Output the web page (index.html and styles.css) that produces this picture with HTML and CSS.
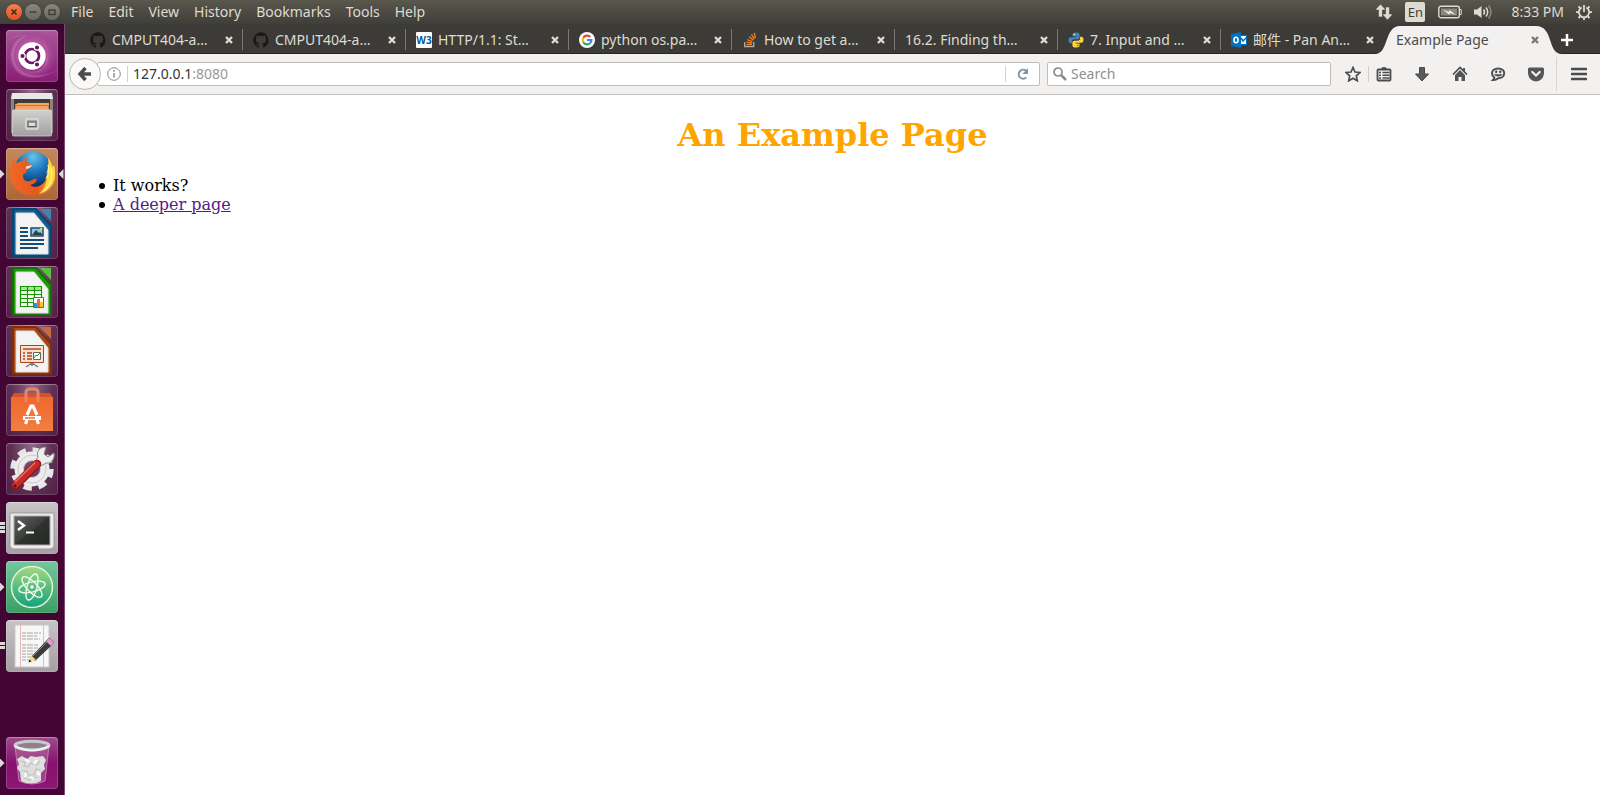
FILE: index.html
```html
<!DOCTYPE html>
<html lang="en">
<head>
<meta charset="utf-8">
<title>Example Page</title>
<link rel="stylesheet" href="styles.css">
</head>
<body>
<div class="desktop">
<header class="panel">
  <div class="window-controls">
    <button class="wc wc-close" aria-label="Close window"><svg width="16" height="16" viewBox="0 0 16 16"><path d="M5.500 5.500l5 5M10.500 5.500l-5 5" stroke="#3c2a20" stroke-width="1.600"/></svg></button>
    <button class="wc" aria-label="Minimize"><svg width="16" height="16" viewBox="0 0 16 16"><path d="M4.500 8h7" stroke="#3a3935" stroke-width="1.300"/></svg></button>
    <button class="wc" aria-label="Maximize"><svg width="16" height="16" viewBox="0 0 16 16"><rect x="5" y="6" width="6" height="4.500" fill="none" stroke="#3a3935" stroke-width="1.300"/></svg></button>
  </div>
  <nav class="menubar">
    <button>File</button><button>Edit</button><button>View</button><button>History</button><button>Bookmarks</button><button>Tools</button><button>Help</button>
  </nav>
  <div class="indicators">
    <button aria-label="Network"><svg width="18" height="18" viewBox="0 0 18 18" fill="#dfdbd2"><path d="M5.500 1L11 7H7.500v7h-4V7H0zM12.500 17L7 11h3.500V4h4v7H18z" stroke="#48463f" stroke-width=".6"/></svg></button>
    <button class="lang" aria-label="Keyboard layout">En</button>
    <button aria-label="Battery"><svg width="24" height="14" viewBox="0 0 24 14"><rect x=".8" y="1.300" width="20.500" height="11.400" rx="2" fill="none" stroke="#dfdbd2" stroke-width="1.400"/><path d="M22 4.500h1.200v5H22" fill="none" stroke="#dfdbd2"/><rect x="3" y="3.500" width="16" height="7" fill="#8b8882"/><path d="M5 4.500l6 2.500.5-2 6.500 5-6-2-.8 1.700z" fill="#f0ede6"/></svg></button>
    <button aria-label="Volume"><svg width="20" height="18" viewBox="0 0 20 18" fill="none" stroke="#dfdbd2" stroke-width="1.500"><path d="M0 6.500h3L7.500 3v12L3 11.500H0z" fill="#dfdbd2" stroke="none"/><path d="M9.500 6.500q2 2.500 0 5M12 4.500q3.500 4.500 0 9"/><path d="M14.500 2.500q5 6.500 0 13" stroke="#8c8981"/></svg></button>
    <button class="clock">8:33 PM</button>
    <button aria-label="Session"><svg width="16" height="18" viewBox="0 0 16 18" fill="none" stroke="#dfdbd2"><path d="M5.700 4.500A5.200 5.200 0 1 0 10.300 4.500" stroke-width="1.800"/><path d="M8 2v7" stroke-width="1.800"/><path d="M0 9.200h2.500M13.500 9.200H16M2.500 15l1.700-1.700M11.800 13.300l1.700 1.700M8 14.500V17M2.500 3.500l1.700 1.700M13.500 3.500l-1.700 1.700" stroke-width="1.800"/></svg></button>
  </div>
</header>
<div class="workspace">
<aside class="launcher">
  <button class="tile t-dash" aria-label="Dash"><svg viewBox="0 0 52 52"><defs><radialGradient id="gd"><stop offset="0" stop-color="#d58bc3"/><stop offset=".6" stop-color="#b5539f"/><stop offset="1" stop-color="#99408a" stop-opacity="0"/></radialGradient></defs><circle cx="26" cy="25" r="25" fill="url(#gd)"/><path d="M2 10C20 1 39 5 42 23c2 10-5 17-14 20 16-3 19-28 5-34C24 3 11 4 2 10z" fill="#dba8cf" opacity=".4"/><path d="M50 40C34 50 14 46 9 32 6 22 10 11 21 6 4 8 0 30 12 42c9 8 27 7 38-2z" fill="#dba8cf" opacity=".3"/><circle cx="26" cy="27.500" r="14" fill="#5a0f4d" opacity=".35"/><circle cx="26" cy="26" r="13.700" fill="#fff"/><circle cx="26" cy="26" r="7" fill="none" stroke="#6c1560" stroke-width="2.700"/><g stroke="#fff" stroke-width="1.200" fill="#6c1560"><circle cx="16.500" cy="26" r="2.700"/><circle cx="31" cy="17.500" r="2.700"/><circle cx="31" cy="34.500" r="2.700"/></g></svg></button>
  <button class="tile t-clear" aria-label="Files"><svg viewBox="0 0 52 52"><defs><linearGradient id="gf" x2="0" y2="1"><stop stop-color="#d2d0cf"/><stop offset="1" stop-color="#a2a09e"/></linearGradient></defs><path d="M6 4h40l1 7v33H5V11z" fill="#868485"/><path d="M6 4h40l1 6H5z" fill="#e8e8e8"/><path d="M8 10h36v12H8z" fill="#403a3b"/><path d="M9 15h34v7H9z" fill="#e7711b"/><path d="M10 18h32M9 20h34" stroke="#f7d9b3"/><path d="M9 16l3-2h31v2z" fill="#f7a657"/><rect x="6.500" y="21" width="39" height="26" rx="1" fill="url(#gf)" stroke="#ddd" stroke-width=".7"/><rect x="20" y="30" width="12" height="10" rx="1.500" fill="#aaa" stroke="#dedede" stroke-width="1.500"/><rect x="22" y="33" width="8" height="4.500" fill="#ddd" stroke="#555"/></svg></button>
  <button class="tile t-fox" aria-label="Firefox"><i class="run"></i><i class="focus"></i><svg viewBox="0 0 52 52"><defs><radialGradient id="gx" cx=".5" cy=".15" r=".8"><stop stop-color="#69c4ed"/><stop offset=".5" stop-color="#1b75ba"/><stop offset="1" stop-color="#0b2e68"/></radialGradient><linearGradient id="gy" x2="1" y2="0"><stop stop-color="#ee6a25"/><stop offset=".6" stop-color="#e8561d"/><stop offset="1" stop-color="#f8bd2b"/></linearGradient></defs><circle cx="27" cy="22" r="18.500" fill="url(#gx)"/><path d="M7 10l3 5q3-2 6-1.500Q19 9 21 9q-1 4 0 6l5 2q-.5 2.500-5 4.500l-1 3.500q-3 0-3 3c0 4 3 6 7 5 3-1 4-3 7-2q-1 5-7 6c7 5 17-1 18-12l3-10q5 7 4 16C47 41 38 47.500 27 47.500 14 47.500 4 38 4 26c0-4 .7-7 2-9q0-4 1-7z" fill="url(#gy)"/><path d="M20 18.500l6-1.500q-1 3-6 4z" fill="#fff" opacity=".8"/><path d="M42 10c3 3 4 7 4 10l2-3c4 14-4 26-15 29 6-5 7-11 8-16l-2 2 3-8-2 2c2-5 3-10 2-16z" fill="#ffda38"/><path d="M45 21c2 9-1 17-7 22M42 17c2 6 0 10-1 13" fill="none" stroke="#fff09b" stroke-width="1.200"/></svg></button>
  <button class="tile t-clear" aria-label="Writer"><svg viewBox="0 0 52 52"><path d="M7 2h23l15 17v30H7z" fill="#145c91" stroke="#0b466f" stroke-width="2"/><path d="M34 2h11v12z" fill="#3c85b5"/><path d="M10 6h18l14 17v24H10z" fill="#f3f3f3" stroke="#ddd"/><path d="M14 21h8M14 25h8M14 29h8M14 33h24M14 37h24M14 41h18" stroke="#174d74" stroke-width="2"/><path d="M25 21h12v8H25z" fill="#8cc7e9" stroke="#174d74" stroke-width="1.500"/><path d="M26 28l4-5 3 3 1-1 3 3z" fill="#353f43"/><circle cx="35" cy="22" r="1.300" fill="#f7d33a"/></svg></button>
  <button class="tile t-clear" aria-label="Calc"><svg viewBox="0 0 52 52"><path d="M7 2h23l15 17v30H7z" fill="#209909" stroke="#147006" stroke-width="2"/><path d="M34 2h11v12z" fill="#5ebd45"/><path d="M10 6h18l14 17v24H10z" fill="#f3f3f3" stroke="#ddd"/><path d="M14.500 20.500h21v20h-21z" fill="#fff"/><path d="M14.500 20.500h21v4h-21z" fill="#a8e596"/><path d="M14.500 20.500h21v20h-21zM14.500 24.500h21M14.500 28.500h21M14.500 32.500h21M14.500 36.500h21M21.500 20v20M28.500 20v20" stroke="#169600" stroke-width="1.200" fill="none"/><path d="M27.500 31.500h10v10h-10z" fill="#fff" stroke="#666"/><path d="M28 37h3v4h-3z" fill="#269ccc"/><path d="M31 33h3v8h-3z" fill="#ef6b30"/><path d="M34 36h3v5h-3z" fill="#f3c733"/></svg></button>
  <button class="tile t-clear" aria-label="Impress"><svg viewBox="0 0 52 52"><path d="M7 2h23l15 17v30H7z" fill="#ab4817" stroke="#7c300b" stroke-width="2"/><path d="M34 2h11v12z" fill="#c76d39"/><path d="M10 6h18l14 17v24H10z" fill="#f3f3f3" stroke="#ddd"/><path d="M14.500 20.500h23v17h-23z" fill="#f9e2d5" stroke="#a6461a"/><path d="M17 24h18" stroke="#d36b36" stroke-width="2"/><path d="M17 28h2M17 31h2M17 34h2M21 28h5M21 31h5M21 34h5" stroke="#a6461a" stroke-width="1.700"/><path d="M27.500 27.500h7v7h-7z" fill="#fff" stroke="#666"/><path d="M28 33l2-3 1 1 3-3" fill="none" stroke="#299525"/><path d="M26 38v3M26 38l-6 4M26 38l6 4" stroke="#777" stroke-width="1.500"/></svg></button>
  <button class="tile t-clear" aria-label="Software"><svg viewBox="0 0 52 52"><defs><linearGradient id="gs" x2="0" y2="1"><stop stop-color="#f0672e"/><stop offset="1" stop-color="#f07f43"/></linearGradient></defs><path d="M5 14l3-5h36l3 5z" fill="#d2552a"/><path d="M5 13h42v34H5z" fill="url(#gs)"/><path d="M20 18V9q0-4 4-4h4q4 0 4 4v9" fill="none" stroke="#e8836a" stroke-width="3"/><path d="M21 31l4-9h2l4 9M19.500 40l1.500-4M32.500 40L31 36" fill="none" stroke="#fff" stroke-width="3.200"/><path d="M17 34h18" stroke="#fff" stroke-width="4"/><path d="M19 34h10" stroke="#ec7237" stroke-width="1.500"/></svg></button>
  <button class="tile t-clear" aria-label="System Settings"><svg viewBox="0 0 52 52"><circle cx="26" cy="26" r="18.500" fill="none" stroke="#e6e6e6" stroke-width="6.500" stroke-dasharray="8 6.530"/><circle cx="26" cy="26" r="13" fill="none" stroke="#ececec" stroke-width="9"/><circle cx="26" cy="26" r="14" fill="none" stroke="#cbcbcb"/><circle cx="26" cy="26" r="8.500" fill="none" stroke="#cfcfcf"/><path d="M29 19l4 5 7-4c5 1 9-4 8-10l-6 4-4-3 2-7c-6 0-10 4-8 10z" fill="#eee" stroke="#8b8b8b"/><path d="M9.500 42.500L31 21" stroke="#8e1516" stroke-width="8.500" stroke-linecap="round"/><path d="M9.500 42L30.500 21" stroke="#c92a2a" stroke-width="6.500" stroke-linecap="round"/><path d="M9 39L29 19.500" stroke="#ed6d66" stroke-width="1.500"/><circle cx="9" cy="43" r="1.500" fill="#650e15"/></svg></button>
  <button class="tile t-gray" aria-label="Terminal"><i class="run run-three"></i><svg viewBox="0 0 52 52"><defs><linearGradient id="gt" x2="1" y2="1"><stop stop-color="#626461"/><stop offset=".5" stop-color="#3b3d3b"/><stop offset=".51" stop-color="#30322f"/><stop offset="1" stop-color="#252725"/></linearGradient></defs><path d="M4 11h44v34l-3 2H7l-3-2z" fill="#ececea" stroke="#999"/><path d="M8 14h36v29H8z" fill="url(#gt)" stroke="#aaa"/><path d="M12 19l6 4.500-6 4.500" fill="none" stroke="#fff" stroke-width="2.500"/><path d="M20 30.500h8" stroke="#fff" stroke-width="2"/></svg></button>
  <button class="tile t-atom" aria-label="Atom"><i class="run"></i><svg viewBox="0 0 52 52"><defs><linearGradient id="ga" x2="0" y2="1"><stop stop-color="#a3d883"/><stop offset="1" stop-color="#12a379"/></linearGradient></defs><circle cx="26" cy="26" r="20.500" fill="url(#ga)" stroke="#e3f2dd" stroke-width="1.500"/><g fill="none" stroke="#eefbee" stroke-width="1.400"><ellipse cx="26" cy="26" rx="13.500" ry="5" transform="rotate(-14 26 26)"/><ellipse cx="26" cy="26" rx="13.500" ry="5" transform="rotate(46 26 26)"/><ellipse cx="26" cy="26" rx="13.500" ry="5" transform="rotate(106 26 26)"/></g><circle cx="26" cy="26" r="1.700" fill="#fff"/></svg></button>
  <button class="tile t-gray" aria-label="Text Editor"><i class="run run-two"></i><svg viewBox="0 0 52 52"><path d="M9 5h34v42H9z" fill="#f7f7f7" stroke="#c8c8c8"/><path d="M14.500 5v42" stroke="#e9b8b8"/><path d="M37.500 5v42" stroke="#b7cbe8"/><path d="M16 13h19M16 16h15M16 19h18M16 25h16M16 28h17M16 31h13M16 34h14M16 37h10M16 40h12" stroke="#a5a5a5" stroke-dasharray="4 1 6 1"/><path d="M25 37l15-16 5 5-16 15z" fill="#3b3b3b"/><path d="M27 36l14-14" stroke="#858585"/><path d="M40 21l3-3 5 4-3 4z" fill="#e79bd5" stroke="#b46ca4"/><path d="M25 35l5 5-7 2z" fill="#f2d77e"/><path d="M23.500 39.500l2 2-3 1z" fill="#222"/></svg></button>
  <button class="tile t-trash" aria-label="Trash"><i class="run"></i><svg viewBox="0 0 52 52"><path d="M9 9l4 35q13 6 26 0l4-35z" fill="#d6aaca" opacity=".3"/><path d="M9 9l4 35q13 6 26 0l4-35" fill="none" stroke="#d4a8c9" opacity=".6"/><path d="M11 22l5-3 5 3 4-3 5 1 7-1 3 4-2 5 1 4-4 4v8q-10 5-20 0l-1-9-3-4 2-4z" fill="#dedede"/><path d="M14 24l5 1-1 4 4 1 3-4 5 2 4-4M16 34l5 0 1 4 6 0 2-6 5 1M18 41l5 2 8-3" fill="none" stroke="#c2c2c2" stroke-width="1.200"/><path d="M19 22l4 3M31 23l-3 4M31 35l3 3M20 36l-1 4M24 40l4 2" stroke="#fafafa" stroke-width="2.500"/><ellipse cx="26" cy="8.500" rx="17" ry="4.200" fill="#8f8090" stroke="#c9c9c9" stroke-width="3"/><path d="M9 9q17 9 34 0" fill="none" stroke="#f0f0f0" stroke-width="2"/></svg></button>
</aside>
<main class="browser">
  <div class="tabstrip">
    <div class="tab"><svg class="fav" viewBox="0 0 16 16"><use href="#github"/></svg><span class="label">CMPUT404-a…</span><button class="x" aria-label="Close tab"><svg viewBox="0 0 8 8"><use href="#cross"/></svg></button></div>
    <div class="tab"><svg class="fav" viewBox="0 0 16 16"><use href="#github"/></svg><span class="label">CMPUT404-a…</span><button class="x" aria-label="Close tab"><svg viewBox="0 0 8 8"><use href="#cross"/></svg></button></div>
    <div class="tab"><span class="fav w3">W3</span><span class="label">HTTP/1.1: St…</span><button class="x" aria-label="Close tab"><svg viewBox="0 0 8 8"><use href="#cross"/></svg></button></div>
    <div class="tab"><svg class="fav" viewBox="0 0 16 16"><circle cx="8" cy="8" r="8" fill="#fff"/><g fill="none" stroke-width="2.200"><path d="M4.300 5.800A4.400 4.400 0 0 1 11.200 4.900" stroke="#ea4335"/><path d="M4.300 5.800a4.400 4.400 0 0 0 0 4.400" stroke="#fbbc05"/><path d="M4.300 10.200a4.400 4.400 0 0 0 6.800 1.100" stroke="#34a853"/><path d="M8 8h4.400a4.400 4.400 0 0 1-1.300 3.300" stroke="#4285f4"/></g></svg><span class="label">python os.pa…</span><button class="x" aria-label="Close tab"><svg viewBox="0 0 8 8"><use href="#cross"/></svg></button></div>
    <div class="tab"><svg class="fav" viewBox="0 0 16 16" fill="none"><path d="M2.700 10v4.500h9V10" stroke="#a9abac" stroke-width="1.300"/><path d="M4.500 12.300h5.500M4.600 10.200l5.500.7M5.300 7.600l5 1.900M7 4.500l4.300 3.700M9.400 2.400l3 4.700M12.300 1l1 5" stroke="#f48024" stroke-width="1.300"/></svg><span class="label">How to get a…</span><button class="x" aria-label="Close tab"><svg viewBox="0 0 8 8"><use href="#cross"/></svg></button></div>
    <div class="tab"><span class="label">16.2. Finding th…</span><button class="x" aria-label="Close tab"><svg viewBox="0 0 8 8"><use href="#cross"/></svg></button></div>
    <div class="tab"><svg class="fav" viewBox="0 0 16 16"><path d="M8 .5C5 .5 4.500 1.500 4.500 2.800v1.700h4v.7H2.800C1.200 5.200.5 6.500.5 8.300s.7 3 2.200 3h1.200V9.500c0-1.400 1-2.200 2.300-2.200h3.500c1.100 0 1.900-.8 1.900-1.900V2.800C11.600 1.300 10.500.5 8 .5z" fill="#4584b6"/><path d="M8 15.500c3 0 3.500-1 3.500-2.300v-1.700h-4v-.7h5.700c1.600 0 2.300-1.300 2.300-3.100s-.7-3-2.200-3h-1.200v1.800c0 1.400-1 2.200-2.300 2.200H6.300c-1.100 0-1.900.8-1.900 1.900v2.600c0 1.500 1.100 2.300 3.600 2.300z" fill="#ffd43b"/><circle cx="6.200" cy="2.500" r=".8" fill="#fff"/><circle cx="9.800" cy="13.500" r=".8" fill="#7c681e"/></svg><span class="label">7. Input and …</span><button class="x" aria-label="Close tab"><svg viewBox="0 0 8 8"><use href="#cross"/></svg></button></div>
    <div class="tab"><svg class="fav" viewBox="0 0 16 16"><path d="M9 3.500h6.500v9H9z" fill="#fff" stroke="#0072c6"/><path d="M10 6l2 3 4-4" fill="none" stroke="#0072c6" stroke-width="1.500"/><path d="M0 2l10-2v16L0 14z" fill="#0072c6"/><ellipse cx="5" cy="8" rx="2" ry="2.700" fill="none" stroke="#fff" stroke-width="1.600"/></svg><span class="label">邮件 - Pan An…</span><button class="x" aria-label="Close tab"><svg viewBox="0 0 8 8"><use href="#cross"/></svg></button></div>
    <div class="tab active"><svg class="shape" viewBox="0 0 187 28" preserveAspectRatio="none"><path d="M0 28C14 28 9 0 25 0H161C179 0 172 28 187 28z" fill="#f2f1f0"/></svg><span class="label">Example Page</span><button class="x" aria-label="Close tab"><svg viewBox="0 0 8 8"><use href="#cross"/></svg></button></div>
    <button class="newtab" aria-label="New tab"><svg width="14" height="14" viewBox="0 0 14 14"><path d="M7 1v12M1 7h12" stroke="#fff" stroke-width="2.500"/></svg></button>
  </div>
  <div class="toolbar">
    <button class="back" aria-label="Back"><svg width="16" height="16" viewBox="0 0 16 16"><path d="M14 8H4M8.500 2L3 8l5.500 6" fill="none" stroke="#4c4c4c" stroke-width="3.400"/></svg></button>
    <div class="urlbar">
      <button class="info" aria-label="Site information"><svg width="14" height="14" viewBox="0 0 14 14"><circle cx="7" cy="7" r="6.300" fill="none" stroke="#8a8a8a"/><path d="M7 6v4.500M7 3v1.700" stroke="#8a8a8a" stroke-width="1.500"/></svg></button>
      <div class="address" role="textbox" aria-label="Address" contenteditable="true" spellcheck="false">127.0.0.1<span class="port">:8080</span></div>
      <button class="reload" aria-label="Reload"><svg width="14" height="14" viewBox="0 0 14 14"><path d="M10.300 10.500A4.500 4.500 0 1 1 10 3.600" fill="none" stroke="#8596a5" stroke-width="2"/><path d="M12 1v6H6.300z" fill="#8596a5"/></svg></button>
    </div>
    <label class="search"><svg width="14" height="14" viewBox="0 0 14 14" fill="none" stroke="#8b8b8b"><circle cx="5" cy="5" r="4" stroke-width="1.700"/><path d="M8 8l5 5" stroke-width="2.500"/></svg><input type="text" placeholder="Search" aria-label="Search"></label>
    <div class="actions">
      <button aria-label="Bookmark"><svg viewBox="0 0 16 16"><path d="M8 1.500l2 4.500 5 .5-3.700 3.400 1 4.900L8 12.300l-4.300 2.500 1-4.900L1 6.500 6 6z" fill="none" stroke="#4c4c4c" stroke-width="1.700"/></svg></button>
      <button class="lists" aria-label="Bookmarks list"><svg viewBox="0 0 16 16"><path d="M2.500 3.500h11q1 0 1 1v9q0 1-1 1h-11q-1 0-1-1v-9q0-1 1-1z" fill="none" stroke="#4c4c4c" stroke-width="1.800"/><path d="M5 4q0-3 3-3t3 3z" fill="#4c4c4c"/><path d="M3 6.500h2M3 9.200h2M3 12h2M6.500 6.500h7M6.500 9.200h7M6.500 12h7" stroke="#4c4c4c" stroke-width="1.500"/></svg></button>
      <button aria-label="Downloads"><svg viewBox="0 0 16 16"><path d="M5.500 1.500h5V8h4L8 15 1.500 8h4z" fill="#5b5b5b" stroke="#484848"/></svg></button>
      <button aria-label="Home"><svg viewBox="0 0 16 16" fill="#545454"><path d="M1 8.500l7-7 7 7" fill="none" stroke="#4c4c4c" stroke-width="1.700"/><path d="M3 9l5-5 5 5v6H9.500v-4h-3v4H3zM11 2h2v4l-2-2z"/></svg></button>
      <button aria-label="Chat"><svg viewBox="0 0 16 16"><path d="M8.200 2.500c3.600 0 6 2 6 4.800s-2.400 4.900-6 4.900c-1.600 1.400-3.500 1.900-5.200 1.800.9-.7 1.300-1.600 1.300-2.600C2.700 10.400 2 8.900 2 7.300c0-2.800 2.600-4.800 6.200-4.800z" fill="none" stroke="#4c4c4c" stroke-width="1.900"/><ellipse cx="6.200" cy="5.800" rx="1.200" ry="1.500" fill="#4c4c4c"/><ellipse cx="10.200" cy="5.800" rx="1.200" ry="1.500" fill="#4c4c4c"/><path d="M3.500 8.200h9.500Q8.500 13 3.500 8.200z" fill="#4c4c4c"/></svg></button>
      <button aria-label="Pocket"><svg viewBox="0 0 16 16"><path d="M1.500 1.500h13q1.500 0 1.500 1.500v4.500Q15 15 8 15.500 1 15 0 7.500V3q0-1.500 1.500-1.500z" fill="#565656"/><path d="M4.300 6L8 9.500 11.700 6" fill="none" stroke="#f2f1f0" stroke-width="2.200" stroke-linecap="round"/></svg></button>
    </div>
    <button class="hamburger" aria-label="Open menu"><svg width="16" height="16" viewBox="0 0 16 16"><path d="M1 3h14M1 8h14M1 13h14" stroke="#4c4c4c" stroke-width="2.600" stroke-linecap="round"/></svg></button>
  </div>
  <article class="page">
    <h1>An Example Page</h1>
    <ul><li>It works?</li><li><a href="#deeper">A deeper page</a></li></ul>
  </article>
</main>
</div>
</div>
<svg class="defs" aria-hidden="true"><defs>
  <g id="cross"><path d="M1 1l6 6M7 1L1 7" stroke="currentColor" stroke-width="2.400"/></g>
  <g id="github"><path d="M8 .2a8 8 0 0 0-2.500 15.500c.4.100.5-.2.500-.4v-1.500c-2.200.5-2.700-1-2.700-1-.4-1-.9-1.200-.9-1.200-.7-.5.100-.5.100-.5.800.100 1.200.8 1.200.8.700 1.300 1.900.9 2.300.7.100-.5.300-.9.500-1.100-1.800-.2-3.600-.9-3.600-4 0-.9.300-1.600.8-2.100-.1-.2-.4-1 .100-2.100 0 0 .7-.2 2.200.8a7.600 7.600 0 0 1 4 0c1.500-1 2.200-.8 2.200-.8.400 1.100.2 1.900.100 2.100.5.600.8 1.300.8 2.100 0 3.100-1.900 3.700-3.700 3.900.3.300.6.800.6 1.500v2.200c0 .2.100.5.500.4A8 8 0 0 0 8 .2z" fill="#191717"/></g>
</defs></svg>
</body>
</html>
```

FILE: styles.css
```css
* { box-sizing: border-box; }
body { margin: 0; font: 14px/20px "Noto Sans", "Noto Sans CJK SC", sans-serif; }
button { border: 0; padding: 0; background: none; font: inherit; color: inherit; }
svg { display: block; }
.defs { position: absolute; width: 0; height: 0; }
.desktop { min-height: 100vh; display: flex; flex-direction: column; }

.panel { height: 24px; display: flex; align-items: center; background: linear-gradient(#5c594c 0, #57544b 2px, #3f3e39); color: #dfdbd2; }
.window-controls { display: flex; gap: 3px; padding-left: 6px; width: 71px; }
.wc { width: 16px; height: 16px; border-radius: 50%; background: linear-gradient(#8a877e, #6a675f); box-shadow: 0 0 0 1px #3c3b3780; }
.wc-close { background: linear-gradient(#f58155, #e4501f); }
.menubar { display: flex; gap: 15px; }
.indicators { margin-left: auto; display: flex; align-items: center; gap: 12px; padding-right: 8px; }
.indicators .lang { width: 20px; height: 20px; margin-right: 1px; border-radius: 2px; background: #dfdbd2; color: #3f3e39; font-size: 13px; }
.clock { margin-left: 5px; }

.workspace { flex: 1; display: flex; }
.launcher { width: 65px; flex: none; display: flex; flex-direction: column; align-items: center; gap: 7px; padding: 6px 1px 6px 0; background: linear-gradient(#300329, #430534 8px); border-right: 1px solid #7c4a73; }
.tile { position: relative; width: 52px; height: 52px; flex: none; border-radius: 4px; box-shadow: inset 0 0 0 1px #ffffff24, inset 0 1px 1px #ffffff40; }
.t-dash { background: linear-gradient(#a95798, #8b1c77); }
.t-clear { background: radial-gradient(ellipse at top, #8f6a87, #5f3254 55%, #521d47); }
.t-fox { background: linear-gradient(#c5895e, #ac6637); }
.t-gray { background: linear-gradient(#c8c3c7, #a59ea3); }
.t-atom { background: linear-gradient(#72c79b, #3b9f64); }
.t-trash { background: linear-gradient(#9d4b8e, #87116d 50%, #8d1777); margin-top: auto; }
.run, .focus { position: absolute; top: 21px; width: 5px; height: 10px; background: #dcd8db; }
.run { left: -6px; clip-path: polygon(0 0, 100% 50%, 0 100%); }
.focus { right: -6px; clip-path: polygon(100% 0, 0 50%, 100% 100%); }
.run-three, .run-two { clip-path: none; background: repeating-linear-gradient(#dcd8db 0 3px, transparent 3px 4px); }
.run-three { top: 20px; height: 11px; }
.run-two { top: 22px; height: 7px; }

.browser { flex: 1; min-width: 0; display: flex; flex-direction: column; background: #fff; }
.tabstrip { height: 30px; display: flex; padding-left: 15px; background: #3c3b37; border-bottom: 1px solid #272623; color: #dfdbd2; }
.tab { position: relative; flex: 1; min-width: 0; display: flex; align-items: center; gap: 6px; padding: 3px 10px 0; background: linear-gradient(#7b7a76, #7b7a76) right 5px / 1px 21px no-repeat; }
.tab:nth-child(8) { background: none; }
.fav { width: 16px; height: 16px; flex: none; }
.w3 { background: #fff; border-radius: 1px; color: #005a9c; font: bold 10px/16px "Open Sans", sans-serif; text-align: center; }
.label { flex: 1; white-space: nowrap; overflow: hidden; }
.x { width: 8px; height: 8px; flex: none; }
.tab.active { background: none; color: #4c4c4c; padding: 3px 8px 0 12px; z-index: 1; }
.shape { position: absolute; left: -9px; top: 2px; width: calc(100% + 24px); height: 28px; }
.active .label, .active .x { position: relative; }
.active .x { color: #777; }
.newtab { width: 53px; display: flex; align-items: center; padding: 3px 0 0 13px; }

.toolbar { height: 41px; display: flex; align-items: center; padding: 0 13px 0 4px; background: #f2f1f0; border-bottom: 1px solid #c3c1be; }
.back { position: relative; z-index: 1; width: 32px; height: 32px; flex: none; display: grid; place-items: center; border: 1px solid #bab8b5; border-radius: 50%; background: #faf9f8; }
.urlbar { flex: 941; min-width: 0; height: 24px; margin-left: -4px; display: flex; align-items: center; border: 1px solid #c0beba; border-radius: 2px; background: #fff; }
.info { height: 16px; width: 30px; padding-left: 9px; display: flex; align-items: center; border-right: 1px solid #d0d0d0; }
.address { flex: 1; padding-left: 5px; color: #333; outline: 0; white-space: nowrap; overflow: hidden; }
.port { color: #999; }
.reload { width: 34px; height: 16px; display: grid; place-items: center; border-left: 1px solid #d0d0d0; }
.search { flex: 272; min-width: 0; height: 24px; margin-left: 7px; padding: 0 5px; display: flex; align-items: center; gap: 4px; border: 1px solid #c0beba; border-radius: 2px; background: #fff; }
.search input { flex: 1; min-width: 0; padding: 0; border: 0; outline: 0; background: none; font: inherit; }
.search input::placeholder { color: #8f8f8f; }
.actions { display: flex; align-items: center; gap: 22px; padding: 0 12px 0 14px; }
.actions svg { width: 16px; height: 16px; }
.actions .lists { margin-left: -15px; padding-left: 7px; border-left: 1px solid #d0cfcd; }
.hamburger { height: 34px; padding-left: 14px; border-left: 1px solid #d8d6d4; display: flex; align-items: center; }

.page { flex: 1; padding: 0 8px; color: #000; font: 16px/19px "DejaVu Serif", serif; }
.page h1 { margin: 21px 0 22px; color: orange; font-size: 32px; line-height: 38px; text-align: center; }
.page ul { margin: 0; padding-left: 40px; list-style: none; }
.page li { position: relative; }
.page li::before { content: ""; position: absolute; left: -14px; top: 7px; width: 6px; height: 6px; border-radius: 50%; background: #000; }
.page a { color: #551a8b; }
```
